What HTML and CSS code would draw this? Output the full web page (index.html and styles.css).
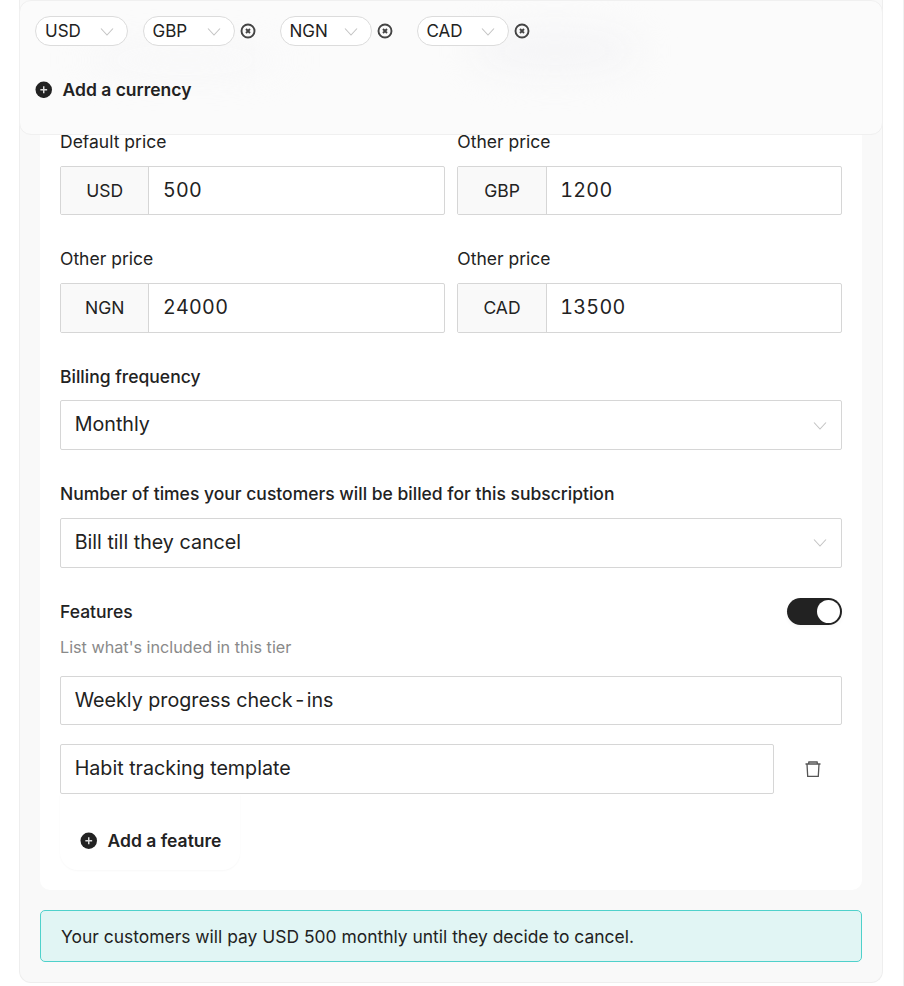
FILE: index.html
```html
<!DOCTYPE html>
<html lang="en">
<head>
  <meta charset="UTF-8" />
  <title>Subscription pricing</title>
  <link rel="stylesheet" href="styles.css">
</head>
<body>
  <div class="page">
    <div class="card">
      <div class="form">
        <div class="price-grid">
          <div class="field">
            <label>Default price</label>
            <div class="price-input"><span class="code">USD</span><span class="value">500</span></div>
          </div>
          <div class="field">
            <label>Other price</label>
            <div class="price-input"><span class="code">GBP</span><span class="value">1200</span></div>
          </div>
          <div class="field">
            <label>Other price</label>
            <div class="price-input"><span class="code">NGN</span><span class="value">24000</span></div>
          </div>
          <div class="field">
            <label>Other price</label>
            <div class="price-input"><span class="code">CAD</span><span class="value">13500</span></div>
          </div>
        </div>

        <div class="field spaced">
          <label class="strong">Billing frequency</label>
          <div class="select">
            <span>Monthly</span>
            <svg class="chevron" viewBox="0 0 14 9"><path d="M1 1.5 7 8l6-6.500"/></svg>
          </div>
        </div>

        <div class="field spaced">
          <label class="strong">Number of times your customers will be billed for this subscription</label>
          <div class="select">
            <span>Bill till they cancel</span>
            <svg class="chevron" viewBox="0 0 14 9"><path d="M1 1.5 7 8l6-6.500"/></svg>
          </div>
        </div>

        <div class="features-head">
          <span class="features-title">Features</span>
          <div class="toggle"><div class="knob"></div></div>
        </div>
        <p class="hint">List what's included in this tier</p>

        <div class="text-input"><span>Weekly progress check<span class="hyphen">-</span>ins</span></div>
        <div class="feature-row">
          <div class="text-input">Habit tracking template</div>
          <svg class="trash" viewBox="0 0 16 16">
            <path d="M.5 3h15M3.500 3l.4-2h8.200l.4 2M2 3l.7 12.300h10.600L14 3"/>
          </svg>
        </div>

        <div class="add-feature">
          <svg class="plus" viewBox="0 0 18 18">
            <circle cx="9" cy="9" r="8.500"/>
            <path d="M9 5.500v7M5.500 9h7"/>
          </svg>
          <span>Add a feature</span>
        </div>
      </div>

      <div class="summary">Your customers will pay USD 500 monthly until they decide to cancel.</div>
    </div>

    <div class="currency-panel">
      <div class="smudge smudge-left"></div>
      <div class="smudge smudge-right"></div>
      <div class="chips">
        <div class="chip-group">
          <div class="chip">USD <svg class="chevron" viewBox="0 0 14 9"><path d="M1 1.5 7 8l6-6.500"/></svg></div>
        </div>
        <div class="chip-group">
          <div class="chip">GBP <svg class="chevron" viewBox="0 0 14 9"><path d="M1 1.5 7 8l6-6.500"/></svg></div>
          <svg class="remove" viewBox="0 0 16 16"><circle cx="8" cy="8" r="6.500"/><path d="m6 6 4 4m0-4-4 4"/></svg>
        </div>
        <div class="chip-group">
          <div class="chip">NGN <svg class="chevron" viewBox="0 0 14 9"><path d="M1 1.5 7 8l6-6.500"/></svg></div>
          <svg class="remove" viewBox="0 0 16 16"><circle cx="8" cy="8" r="6.500"/><path d="m6 6 4 4m0-4-4 4"/></svg>
        </div>
        <div class="chip-group">
          <div class="chip">CAD <svg class="chevron" viewBox="0 0 14 9"><path d="M1 1.5 7 8l6-6.500"/></svg></div>
          <svg class="remove" viewBox="0 0 16 16"><circle cx="8" cy="8" r="6.500"/><path d="m6 6 4 4m0-4-4 4"/></svg>
        </div>
      </div>
      <div class="add-currency">
        <svg class="plus" viewBox="0 0 18 18">
          <circle cx="9" cy="9" r="8.500"/>
          <path d="M9 5.500v7M5.500 9h7"/>
        </svg>
        <span>Add a currency</span>
      </div>
    </div>
  </div>
</body>
</html>
```
FILE: styles.css
```css
* {
  box-sizing: border-box;
}
html, body {
  margin: 0;
  padding: 0;
  background-color: #fff;
}
body {
  font-family: Inter, "Liberation Sans", sans-serif;
  color: #222;
  overflow: hidden;
}
.page {
  position: relative;
  width: 904px;
  height: 986px;
  border-right: 1px solid #f0f0f0;
}
.card {
  width: 864px;
  height: 983px;
  margin-left: 19px;
  padding: 0 20px 20px;
  background-color: #f9f9f9;
  border: 1px solid #eee;
  border-top: none;
  border-radius: 0 0 12px 12px;
}
.form {
  height: 890px;
  padding: 132px 20px 20px;
  background-color: #fff;
  border-radius: 0 0 10px 10px;
}
.price-grid {
  display: grid;
  grid-template-columns: 385px 385px;
  column-gap: 12.300px;
  row-gap: 34px;
}
.field label {
  display: block;
  font-size: 17.500px;
  line-height: 20px;
  margin-bottom: 13.600px;
}
.field label.strong {
  font-weight: 500;
}
.field.spaced {
  margin-top: 34px;
}
.price-input {
  display: flex;
  height: 49.800px;
  border: 1px solid #d6d6d6;
  border-radius: 2px;
}
.code {
  display: flex;
  align-items: center;
  justify-content: center;
  width: 88.400px;
  background-color: #f9f9f9;
  border-right: 1px solid #d6d6d6;
  font-size: 17.500px;
}
.value {
  display: flex;
  align-items: center;
  padding: 0 0 1px 13.500px;
  font-size: 19.700px;
  font-variant-numeric: tabular-nums;
  letter-spacing: 0.300px;
}
.select {
  display: flex;
  align-items: center;
  justify-content: space-between;
  height: 49.800px;
  padding: 0 14px 0 13.700px;
  border: 1px solid #d6d6d6;
  border-radius: 2px;
  font-size: 19.700px;
}
.select span {
  padding-bottom: 2px;
}
.chevron {
  width: 14px;
  height: 9px;
  fill: none;
  stroke: #c4c4c4;
  stroke-width: 1.100;
}
.features-head {
  display: flex;
  align-items: center;
  justify-content: space-between;
  margin-top: 30.600px;
  height: 27px;
}
.features-title {
  font-size: 17.500px;
  font-weight: 500;
}
.toggle {
  display: flex;
  justify-content: flex-end;
  align-items: center;
  width: 55px;
  height: 27px;
  padding-right: 2px;
  background-color: #222;
  border-radius: 14px;
  box-shadow: 0 2px 4px rgba(0, 0, 0, 0.04);
}
.knob {
  width: 23px;
  height: 23px;
  background-color: #fff;
  border-radius: 50%;
}
.hint {
  margin: 11.800px 0 19px;
  font-size: 16.200px;
  line-height: 20px;
  color: #8a8a8a;
}
.text-input {
  display: flex;
  align-items: center;
  height: 49px;
  padding: 0 14px 1px 13.700px;
  border: 1px solid #d6d6d6;
  border-radius: 2px;
  font-size: 19.700px;
}
.hyphen {
  padding: 0 2.500px;
}
.feature-row {
  display: flex;
  align-items: center;
  margin-top: 19px;
}
.feature-row .text-input {
  width: 714px;
  height: 50px;
  padding-bottom: 2px;
}
.trash {
  width: 16px;
  height: 16px;
  margin-left: 31px;
  fill: none;
  stroke: #555;
  stroke-width: 1.300;
}
.add-feature {
  display: flex;
  align-items: center;
  gap: 10px;
  width: 180px;
  height: 76px;
  padding: 18px 20px 0;
  border-radius: 0 0 18px 18px;
  box-shadow: 0 1px 2px rgba(0, 0, 0, 0.03);
  font-size: 17.500px;
  font-weight: 600;
  white-space: nowrap;
}
.plus {
  width: 17.500px;
  height: 17.500px;
  flex-shrink: 0;
}
.plus circle {
  fill: #222;
}
.plus path {
  fill: none;
  stroke: #ddd;
  stroke-width: 1.500;
}
.summary {
  display: flex;
  align-items: center;
  height: 52px;
  margin-top: 20px;
  padding: 0 20px;
  background-color: #e1f5f4;
  border: 1px solid #4fd1cb;
  border-radius: 5px;
  font-size: 17.450px;
}
.currency-panel {
  position: absolute;
  top: 0;
  left: 19px;
  width: 864px;
  height: 135px;
  padding: 15px 15px 0;
  background-color: #fbfbfb;
  border: 1px solid #f0f0f0;
  border-radius: 12px;
  overflow: hidden;
}
.smudge {
  position: absolute;
  border-radius: 50%;
  background-color: #f4f4f6;
  filter: blur(18px);
}
.smudge-left {
  top: 48px;
  left: 60px;
  width: 210px;
  height: 22px;
  opacity: 0.6;
}
.smudge-right {
  top: 30px;
  left: 450px;
  width: 170px;
  height: 40px;
}
.chips {
  position: relative;
  display: flex;
  align-items: center;
  gap: 15px;
}
.chip-group {
  display: flex;
  align-items: center;
  gap: 4.500px;
}
.chip {
  display: flex;
  align-items: center;
  justify-content: space-between;
  width: 92.500px;
  height: 30px;
  padding: 0 13px 0 9px;
  background-color: #fff;
  border: 1px solid #dcdcdc;
  border-radius: 15px;
  font-size: 17px;
}
.remove {
  width: 16px;
  height: 16px;
  margin-right: 9px;
  fill: none;
  stroke: #444;
  stroke-width: 1.900;
}
.add-currency {
  position: relative;
  display: flex;
  align-items: center;
  gap: 10px;
  margin-top: 33px;
  font-size: 17.500px;
  font-weight: 600;
}
```
